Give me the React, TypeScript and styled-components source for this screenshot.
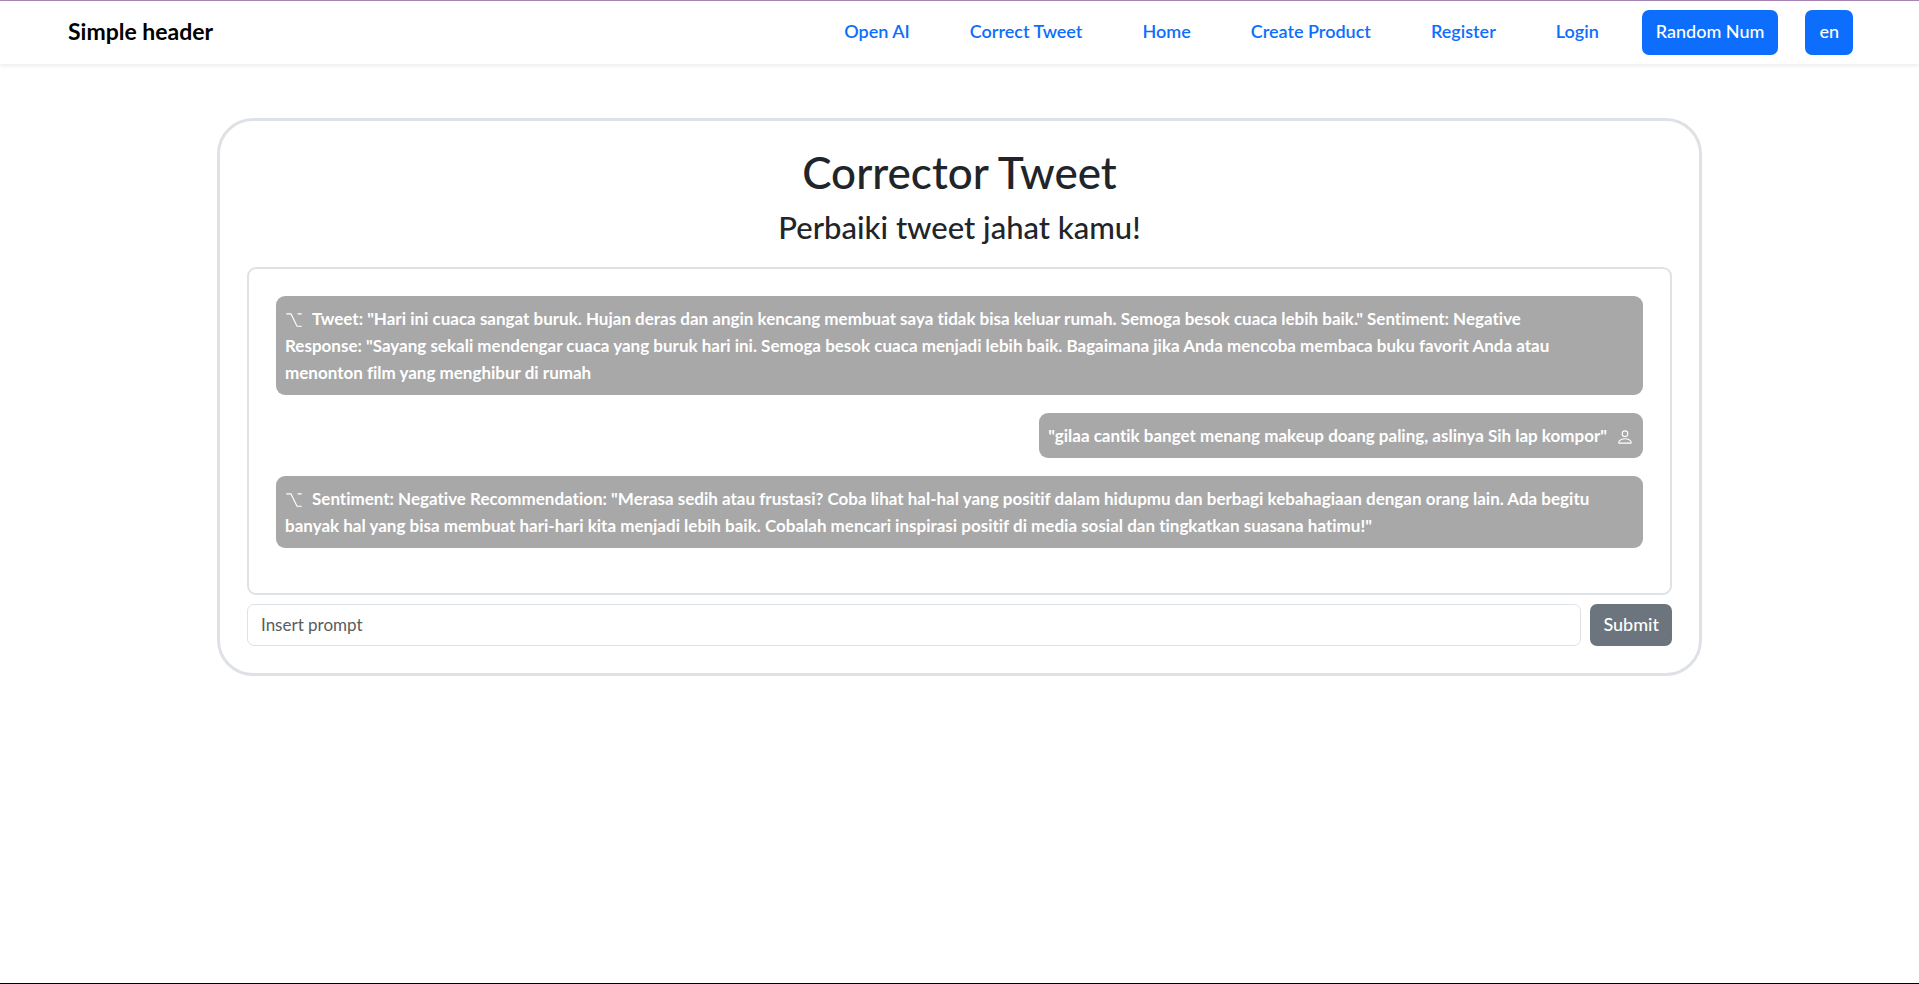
import React, { Fragment } from "react";
import styled, { createGlobalStyle } from "styled-components";
import { BsOption, BsPerson } from "react-icons/bs";

const GlobalStyle = createGlobalStyle`
  *, *::before, *::after { box-sizing: border-box; }
  body {
    margin: 0;
    color: #212529;
    background: #fff;
    font: 500 18px/27px Lato, "Open Sans", sans-serif;
    font-variant-ligatures: none;
  }
  button, input { font: inherit; }
`;

const Page = styled.div`
  min-height: 100vh;
  border-top: 1px solid #a985b5;
  border-bottom: 1px solid #000;
`;

const Header = styled.header`
  display: flex;
  align-items: center;
  justify-content: space-between;
  padding: 9px 66px 9px 68px;
  box-shadow: 0 2px 4px rgba(0, 0, 0, 0.075);
`;

const Brand = styled.a`
  padding-bottom: 2px;
  color: #000;
  font-size: 23px;
  font-weight: 700;
  text-decoration: none;
`;

const Nav = styled.nav`
  display: flex;
  align-items: center;
  gap: 27px;
`;

const NavLinks = styled.ul`
  display: flex;
  gap: 60px;
  margin: 0 16px 0 0;
  padding: 0 0 2px;
  list-style: none;
`;

const NavLink = styled.a`
  color: #0d6efd;
  font-weight: 600;
  text-decoration: none;
`;

const Button = styled.button<{ $tone: "primary" | "secondary" }>`
  padding: ${(p) => (p.$tone === "primary" ? "8px 14px 10px" : "7px 13px 8px")};
  border: 0;
  border-radius: 7px;
  color: #fff;
  background: ${(p) => (p.$tone === "primary" ? "#0d6efd" : "#6c757d")};
  white-space: nowrap;
`;

const Card = styled.main`
  max-width: 1485px;
  margin: 54px auto 0;
  padding: 24px 27px 27px;
  border: 3px solid #dee2e6;
  border-radius: 36px;
`;

const Title = styled.h1`
  margin: 0 0 9px;
  font-size: 44px;
  line-height: 54px;
  font-weight: 500;
  text-align: center;
`;

const Subtitle = styled.h2`
  margin: 0 0 21px;
  font-size: 31px;
  line-height: 38px;
  font-weight: 500;
  text-align: center;
`;

const Chat = styled.section`
  display: flex;
  flex-direction: column;
  gap: 18px;
  padding: 27px 27px 45px;
  border: 2px solid #dee2e6;
  border-radius: 9px;
`;

const Bubble = styled.p<{ $own?: boolean }>`
  align-self: ${(p) => (p.$own ? "flex-end" : "stretch")};
  margin: 0;
  padding: 9px;
  border-radius: 9px;
  color: #fff;
  background: #a8a8a8;
  font-size: 17px;
  font-weight: 700;

  svg {
    vertical-align: -4px;
    margin: ${(p) => (p.$own ? "0 0 0 9px" : "0 9px 0 0")};
  }
`;

const PromptForm = styled.form`
  display: flex;
  gap: 9px;
  margin-top: 9px;
`;

const PromptInput = styled.input`
  flex: 1;
  min-width: 0;
  height: 42px;
  padding: 5px 13px 7px;
  border: 1px solid #dee2e6;
  border-radius: 7px;
  background: #fff;
  color: #212529;
  font-size: 17px;
  font-weight: 400;

  &::placeholder {
    color: #595c5f;
    opacity: 1;
  }
`;

const links = ["Open AI", "Correct Tweet", "Home", "Create Product", "Register", "Login"];

const messages = [
  {
    own: false,
    lines: [
      'Tweet: "Hari ini cuaca sangat buruk. Hujan deras dan angin kencang membuat saya tidak bisa keluar rumah. Semoga besok cuaca lebih baik." Sentiment: Negative',
      'Response: "Sayang sekali mendengar cuaca yang buruk hari ini. Semoga besok cuaca menjadi lebih baik. Bagaimana jika Anda mencoba membaca buku favorit Anda atau',
      "menonton film yang menghibur di rumah",
    ],
  },
  {
    own: true,
    lines: ['"gilaa cantik banget menang makeup doang paling, aslinya Sih lap kompor"'],
  },
  {
    own: false,
    lines: [
      'Sentiment: Negative Recommendation: "Merasa sedih atau frustasi? Coba lihat hal-hal yang positif dalam hidupmu dan berbagi kebahagiaan dengan orang lain. Ada begitu',
      'banyak hal yang bisa membuat hari-hari kita menjadi lebih baik. Cobalah mencari inspirasi positif di media sosial dan tingkatkan suasana hatimu!"',
    ],
  },
];

export default function App() {
  return (
    <Page>
      <GlobalStyle />
      <Header>
        <Brand href="#">Simple header</Brand>
        <Nav>
          <NavLinks>
            {links.map((label) => (
              <li key={label}>
                <NavLink href="#">{label}</NavLink>
              </li>
            ))}
          </NavLinks>
          <Button type="button" $tone="primary">Random Num</Button>
          <Button type="button" $tone="primary">en</Button>
        </Nav>
      </Header>
      <Card>
        <Title>Corrector Tweet</Title>
        <Subtitle>Perbaiki tweet jahat kamu!</Subtitle>
        <Chat>
          {messages.map(({ own, lines }) => (
            <Bubble key={lines[0]} $own={own}>
              {!own && <BsOption size={18} aria-hidden />}
              {lines.map((line, i) => (
                <Fragment key={line}>
                  {i > 0 && <br />}
                  {line}
                </Fragment>
              ))}
              {own && <BsPerson size={18} aria-hidden />}
            </Bubble>
          ))}
        </Chat>
        <PromptForm onSubmit={(e) => e.preventDefault()}>
          <PromptInput type="text" aria-label="Prompt" placeholder="Insert prompt" />
          <Button type="submit" $tone="secondary">Submit</Button>
        </PromptForm>
      </Card>
    </Page>
  );
}
